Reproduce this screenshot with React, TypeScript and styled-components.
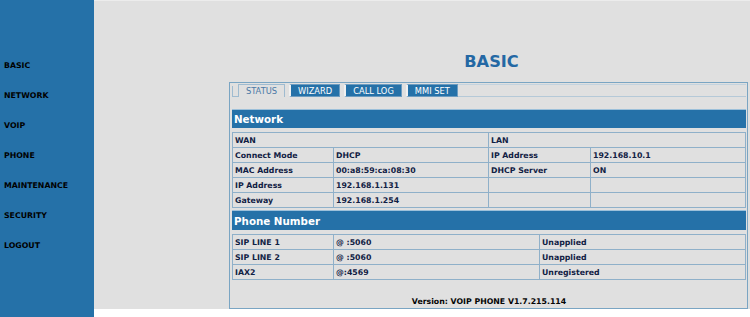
import React from 'react';
import styled, { createGlobalStyle } from 'styled-components';

const BLUE = '#2571a8';
const GRAY = '#e0e0e0';
const LINE = '#8fb0c9';

const GlobalStyle = createGlobalStyle`
  html, body {
    margin: 0;
    padding: 0;
    background: #ffffff;
  }
  body {
    font-family: "DejaVu Sans", Verdana, sans-serif;
  }
`;

const Page = styled.div`
  display: flex;
  width: 750px;
  height: 317px;
  overflow: hidden;
`;

const Sidebar = styled.nav`
  width: 94px;
  flex: 0 0 94px;
  height: 317px;
  background: ${BLUE};
  padding-top: 51px;
  box-sizing: border-box;
`;

const NavItem = styled.div`
  height: 30px;
  line-height: 30px;
  padding-left: 4px;
  font-size: 7.8px;
  font-weight: bold;
  color: #000000;
`;

const Main = styled.main`
  width: 656px;
  height: 309px;
  background: ${GRAY};
  border-top: 1px solid #ececec;
  box-sizing: border-box;
  padding-left: 135px;
`;

const Title = styled.h1`
  margin: 0;
  width: 519px;
  padding: 51px 0 0 6px;
  box-sizing: border-box;
  height: 81px;
  line-height: 20px;
  text-align: center;
  font-size: 16.2px;
  font-weight: bold;
  color: #2468a4;
`;

const Panel = styled.section`
  width: 519px;
  height: 227px;
  box-sizing: border-box;
  border: 1px solid #7aa5c3;
  padding: 0 1px 0 2px;
  display: flex;
  flex-direction: column;
`;

const TabStrip = styled.div`
  display: flex;
  align-items: stretch;
  height: 13px;
  margin-top: 1px;
`;

const TabLead = styled.div`
  width: 6px;
  margin-top: 2px;
  border-left: 1px solid #9fbbd0;
  border-bottom: 1px solid #9fbbd0;
  box-sizing: border-box;
`;

const Tab = styled.div<{ $active?: boolean }>`
  box-sizing: border-box;
  display: flex;
  align-items: center;
  justify-content: center;
  font-size: 8.3px;
  width: ${(p) => (p.$active ? '47px' : 'auto')};
  padding: ${(p) => (p.$active ? '0' : '0 7px')};
  margin-left: ${(p) => (p.$active ? '0' : '4px')};
  color: ${(p) => (p.$active ? '#4b79a6' : '#ffffff')};
  background: ${(p) => (p.$active ? GRAY : BLUE)};
  border: 1px solid ${(p) => (p.$active ? '#9fbbd0' : '#6d9cc0')};
  border-bottom: ${(p) => (p.$active ? 'none' : '1px solid #6d9cc0')};
  border-left: ${(p) => (p.$active ? '1px solid #9fbbd0' : '2px solid #f1f1f1')};
`;

const TabFill = styled.div`
  flex: 1;
  border-top: 1px solid #c3d3df;
  border-bottom: 1px solid #b5c9d8;
  box-sizing: border-box;
`;

const SectionHeader = styled.div<{ $gap: number; $h: number }>`
  margin-top: ${(p) => p.$gap}px;
  height: ${(p) => p.$h}px;
  line-height: ${(p) => p.$h}px;
  box-sizing: border-box;
  background: ${BLUE};
  border-top: 1px solid #9cc0da;
  padding-left: 2px;
  color: #ffffff;
  font-size: 10.3px;
  font-weight: bold;
`;

const Table = styled.table`
  margin-top: 4px;
  width: 100%;
  border-collapse: collapse;
  table-layout: fixed;
`;

const Cell = styled.td`
  height: 15px;
  padding: 0 0 0 2px;
  border: 1px solid ${LINE};
  font-size: 7.8px;
  font-weight: bold;
  color: #112044;
  white-space: nowrap;
  overflow: hidden;
  box-sizing: border-box;
`;

const Version = styled.div`
  margin-top: auto;
  height: 12px;
  line-height: 12px;
  text-align: center;
  font-size: 7.8px;
  font-weight: bold;
  color: #050505;
`;

const navItems = ['BASIC', 'NETWORK', 'VOIP', 'PHONE', 'MAINTENANCE', 'SECURITY', 'LOGOUT'];
const tabs = ['STATUS', 'WIZARD', 'CALL LOG', 'MMI SET'];

const networkRows = [
  ['Connect Mode', 'DHCP', 'IP Address', '192.168.10.1'],
  ['MAC Address', '00:a8:59:ca:08:30', 'DHCP Server', 'ON'],
  ['IP Address', '192.168.1.131', '', ''],
  ['Gateway', '192.168.1.254', '', ''],
];

const phoneRows = [
  ['SIP LINE 1', '@ :5060', 'Unapplied'],
  ['SIP LINE 2', '@ :5060', 'Unapplied'],
  ['IAX2', '@:4569', 'Unregistered'],
];

export default function App() {
  return (
    <>
      <GlobalStyle />
      <Page>
        <Sidebar>
          {navItems.map((n) => (
            <NavItem key={n}>{n}</NavItem>
          ))}
        </Sidebar>
        <Main>
          <Title>BASIC</Title>
          <Panel>
            <TabStrip>
              <TabLead />
              {tabs.map((t, i) => (
                <Tab key={t} $active={i === 0}>{t}</Tab>
              ))}
              <TabFill />
            </TabStrip>

            <SectionHeader $gap={12} $h={19}>Network</SectionHeader>
            <Table>
              <colgroup>
                <col style={{ width: '101px' }} />
                <col style={{ width: '155px' }} />
                <col style={{ width: '102px' }} />
                <col />
              </colgroup>
              <tbody>
                <tr>
                  <Cell colSpan={2}>WAN</Cell>
                  <Cell colSpan={2}>LAN</Cell>
                </tr>
                {networkRows.map((r) => (
                  <tr key={r[0]}>
                    {r.map((c, i) => (
                      <Cell key={i}>{c}</Cell>
                    ))}
                  </tr>
                ))}
              </tbody>
            </Table>

            <SectionHeader $gap={2} $h={20}>Phone Number</SectionHeader>
            <Table>
              <colgroup>
                <col style={{ width: '101px' }} />
                <col style={{ width: '206px' }} />
                <col />
              </colgroup>
              <tbody>
                {phoneRows.map((r) => (
                  <tr key={r[0]}>
                    {r.map((c, i) => (
                      <Cell key={i}>{c}</Cell>
                    ))}
                  </tr>
                ))}
              </tbody>
            </Table>

            <Version>Version: VOIP PHONE V1.7.215.114</Version>
          </Panel>
        </Main>
      </Page>
    </>
  );
}
